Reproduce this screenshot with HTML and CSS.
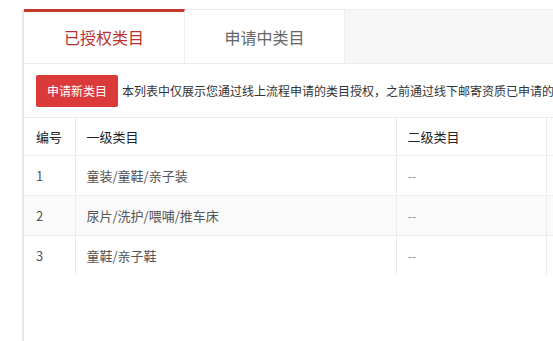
FILE: index.html
```html
<!DOCTYPE html>
<html lang="zh">
<head>
<meta charset="utf-8">
<link rel="stylesheet" href="styles.css">
</head>
<body>
<div class="page">
  <div class="tabs">
    <div class="tab active">已授权类目</div>
    <div class="tab">申请中类目</div>
    <div class="tab-fill"></div>
  </div>
  <div class="toolbar">
    <button class="btn">申请新类目</button>
    <span class="note">本列表中仅展示您通过线上流程申请的类目授权，之前通过线下邮寄资质已申请的</span>
  </div>
  <table class="grid">
    <colgroup>
      <col class="c1"><col class="c2"><col class="c3"><col class="c4">
    </colgroup>
    <thead>
      <tr><th>编号</th><th>一级类目</th><th>二级类目</th><th></th></tr>
    </thead>
    <tbody>
      <tr><td>1</td><td>童装/童鞋/亲子装</td><td class="dash">--</td><td></td></tr>
      <tr class="alt"><td>2</td><td>尿片/洗护/喂哺/推车床</td><td class="dash">--</td><td></td></tr>
      <tr><td>3</td><td>童鞋/亲子鞋</td><td class="dash">--</td><td></td></tr>
    </tbody>
  </table>
</div>
</body>
</html>
```
FILE: styles.css
```css
html, body {
  margin: 0;
  padding: 0;
  background: #fff;
  overflow: hidden;
  width: 553px;
  height: 341px;
}
body {
  font-family: "Noto Sans CJK SC", "Microsoft YaHei", sans-serif;
  color: #333;
}
.page {
  margin: 9px 0 0 22px;
  border-left: 2px solid #e6e6e6;
  width: 529px;
  height: 332px;
  overflow: hidden;
}
.tabs {
  display: flex;
  height: 54px;
  border-bottom: 1px solid #ececec;
}
.tab {
  width: 160px;
  box-sizing: border-box;
  display: flex;
  align-items: center;
  justify-content: center;
  font-size: 16px;
  color: #666;
  background: #fff;
  border-top: 1px solid #eee;
  border-right: 1px solid #eee;
}
.tab.active {
  color: #b8312f;
  border-top: 3px solid #c0392b;
  padding-bottom: 2px;
  width: 161px;
}
.tab-fill {
  flex: 1;
  background: #f7f7f7;
  border-top: 1px solid #ececec;
}
.toolbar {
  display: flex;
  align-items: center;
  height: 53px;
  padding-left: 12px;
  border-bottom: 1px solid #ececec;
  white-space: nowrap;
}
.btn {
  flex: none;
  width: 82px;
  height: 32px;
  border: none;
  border-radius: 2px;
  background: #db3a3a;
  color: #fff;
  font-family: inherit;
  font-size: 12px;
  padding: 0;
  margin-right: 4px;
}
.note {
  font-size: 12px;
  color: #333;
}
.grid {
  border-collapse: collapse;
  table-layout: fixed;
  width: 700px;
  font-size: 13px;
}
.c1 { width: 51px; }
.c2 { width: 321px; }
.c3 { width: 150px; }
.c4 { width: 178px; }
.grid th, .grid td {
  text-align: left;
  padding: 0 0 0 11px;
  border-left: 1px solid #ebebeb;
  border-bottom: 1px solid #efefef;
}
.grid th:first-child, .grid td:first-child {
  border-left: none;
  padding-left: 12px;
}
.grid th {
  height: 37px;
  font-weight: 400;
  color: #222;
}
.grid td {
  height: 39px;
  color: #555;
}
.grid tbody tr:last-child td {
  border-bottom: none;
}
.grid tr.alt td {
  background: #fafafa;
}
.grid td.dash {
  color: #999;
}
```
